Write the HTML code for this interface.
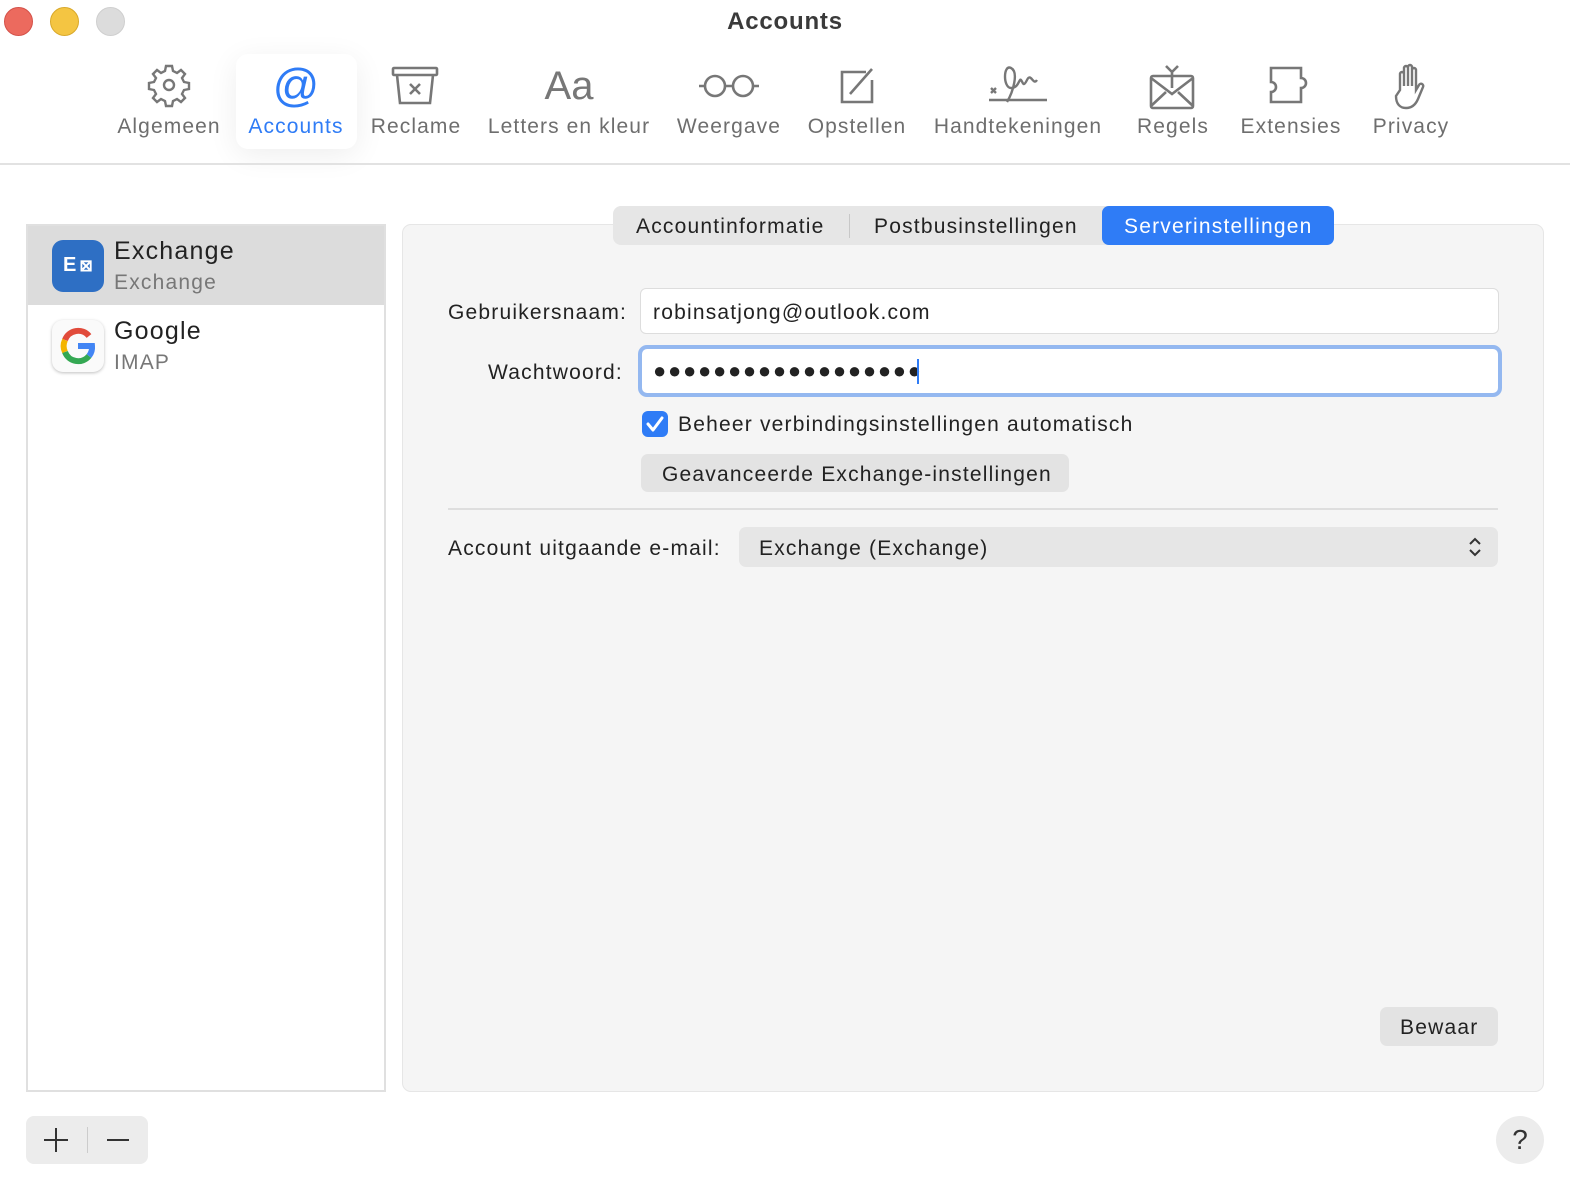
<!DOCTYPE html>
<html><head><meta charset="utf-8"><style>
*{box-sizing:border-box;margin:0;padding:0}
body{width:1570px;height:1182px;background:#fff;font-family:"Liberation Sans",sans-serif;position:relative;overflow:hidden;color:#222}
.a{position:absolute}
.tl{width:29px;height:29px;border-radius:50%;top:7px}
.lbl{position:absolute;top:115px;font-size:21px;color:#6e6e6e;white-space:nowrap;transform:translateX(-50%);letter-spacing:1.1px}
.ic{position:absolute;top:62px;transform:translateX(-50%)}
.t{font-size:21px;white-space:nowrap;letter-spacing:1.2px}
</style></head><body>
<div class="a tl" style="left:4px;background:#ec6a5e;border:1px solid #d4524a"></div>
<div class="a tl" style="left:50px;background:#f4c542;border:1px solid #d9a92b"></div>
<div class="a tl" style="left:96px;background:#dcdcdc;border:1px solid #cfcfcf"></div>
<div class="a" style="left:0;width:1570px;top:8px;text-align:center;font-size:24px;font-weight:bold;color:#3a3a3a;letter-spacing:0.8px">Accounts</div>

<div class="a" style="left:236px;top:54px;width:121px;height:95px;background:#fff;border-radius:12px;box-shadow:0 6px 30px rgba(0,0,0,0.07)"></div>

<svg class="ic" style="left:169px" width="46" height="46" viewBox="0 0 46 46" fill="none" stroke="#777" stroke-width="2.4"><path d="M20 4h6l1 5 4 2 4-3 4 4-3 4 2 4 5 1v6l-5 1-2 4 3 4-4 4-4-3-4 2-1 5h-6l-1-5-4-2-4 3-4-4 3-4-2-4-5-1v-6l5-1 2-4-3-4 4-4 4 3 4-2z"/><circle cx="23" cy="23" r="5"/></svg>
<div class="ic" style="left:296px;top:58px;font-size:46px;color:#2f7cf6">@</div>
<svg class="ic" style="left:415px" width="50" height="46" viewBox="0 0 50 46" fill="none" stroke="#777" stroke-width="2.6"><rect x="3" y="6" width="44" height="7" rx="1"/><path d="M7 13l3 28h30l3-28"/><path d="M20 22l10 10M30 22l-10 10"/></svg>
<div class="ic" style="left:569px;top:64px;font-size:40px;color:#777">Aa</div>
<svg class="ic" style="left:729px" width="64" height="46" viewBox="0 0 64 46" fill="none" stroke="#777" stroke-width="2.6"><circle cx="18" cy="24" r="10"/><circle cx="46" cy="24" r="10"/><path d="M28 24h8M2 24h6M56 24h6"/></svg>
<svg class="ic" style="left:857px" width="46" height="46" viewBox="0 0 46 46" fill="none" stroke="#777" stroke-width="2.6"><path d="M32 10H8v30h30V18"/><path d="M16 32l22-25"/></svg>
<svg class="ic" style="left:1018px" width="62" height="46" viewBox="0 0 62 46" fill="none" stroke="#777" stroke-width="2.4"><path d="M2 38h58"/><path d="M4 26l5 5M9 26l-5 5"/><path d="M20 40c6-10 12-30 4-34s-8 20 0 20 8-10 10-8 2 8 6 0 6 6 10 0"/></svg>
<svg class="ic" style="left:1172px" width="50" height="48" viewBox="0 0 50 48" fill="none" stroke="#777" stroke-width="2.6"><rect x="4" y="14" width="42" height="32" rx="2"/><path d="M4 16l21 16 21-16M4 44l15-14M46 44l-15-14"/><path d="M25 26V8M25 10l-6-6M25 10l6-6"/></svg>
<svg class="ic" style="left:1292px" width="50" height="46" viewBox="0 0 50 46" fill="none" stroke="#777" stroke-width="2.6"><path d="M4 6h30v10a5 5 0 1 1 0 10v14H4V30a5 5 0 1 0 0-10z"/></svg>
<svg class="ic" style="left:1411px" width="40" height="48" viewBox="0 0 40 48" fill="none" stroke="#777" stroke-width="2.4"><path d="M9 28V12a2 2 0 0 1 4 0v12V6a2 2 0 0 1 4 0v18V5a2 2 0 0 1 4 0v19V8a2 2 0 0 1 4 0v20l3-5a2 2 0 0 1 4 2l-5 12c-3 7-8 9-12 9-6 0-10-4-10-12z"/></svg>

<div class="lbl" style="left:169px">Algemeen</div>
<div class="lbl" style="left:296px;color:#2f7cf6">Accounts</div>
<div class="lbl" style="left:416px">Reclame</div>
<div class="lbl" style="left:569px">Letters en kleur</div>
<div class="lbl" style="left:729px">Weergave</div>
<div class="lbl" style="left:857px">Opstellen</div>
<div class="lbl" style="left:1018px">Handtekeningen</div>
<div class="lbl" style="left:1173px">Regels</div>
<div class="lbl" style="left:1291px">Extensies</div>
<div class="lbl" style="left:1411px">Privacy</div>

<div class="a" style="left:0;top:163px;width:1570px;height:2px;background:#e2e2e2"></div>

<div class="a" style="left:26px;top:224px;width:360px;height:868px;border:2px solid #e0e0e0;background:#fff"></div>
<div class="a" style="left:28px;top:226px;width:356px;height:79px;background:#dcdcdc"></div>
<div class="a" style="left:52px;top:240px;width:52px;height:52px;border-radius:11px;background:#2e6fc4;color:#fff;font-weight:bold;font-size:20px;padding:14px 0 0 11px">E<span style="font-size:16px;margin-left:3px">⊠</span></div>
<div class="a t" style="left:114px;top:237px;font-size:25px;color:#222">Exchange</div>
<div class="a t" style="left:114px;top:271px;color:#777">Exchange</div>
<div class="a" style="left:52px;top:320px;width:52px;height:52px;border-radius:11px;background:#fafafa;box-shadow:0 1px 3px rgba(0,0,0,.25)"></div>
<svg class="a" style="left:58px;top:326px" width="40" height="40" viewBox="0 0 40 40" fill="none" stroke-width="6"><path d="M31 10A14 14 0 0 0 7 14" stroke="#e14b3b"/><path d="M7 14a14 14 0 0 0 0 12" stroke="#f4b400"/><path d="M7 26a14 14 0 0 0 24 4" stroke="#34a853"/><path d="M31 30a14 14 0 0 0 3-10H20" stroke="#4285f4"/></svg>
<div class="a t" style="left:114px;top:317px;font-size:25px;color:#222">Google</div>
<div class="a t" style="left:114px;top:351px;color:#777">IMAP</div>

<div class="a" style="left:402px;top:224px;width:1142px;height:868px;background:#f5f5f5;border:1px solid #e6e6e6;border-radius:9px"></div>
<div class="a" style="left:613px;top:206px;width:721px;height:39px;background:#e6e6e6;border-radius:8px"></div>
<div class="a" style="left:849px;top:214px;width:1px;height:24px;background:#c8c8c8"></div>
<div class="a" style="left:1102px;top:206px;width:232px;height:39px;background:#2f7cf6;border-radius:7px"></div>
<div class="a t" style="left:636px;top:215px">Accountinformatie</div>
<div class="a t" style="left:874px;top:215px">Postbusinstellingen</div>
<div class="a t" style="left:1124px;top:215px;color:#fff">Serverinstellingen</div>

<div class="a t" style="left:448px;top:301px">Gebruikersnaam:</div>
<div class="a" style="left:640px;top:288px;width:859px;height:46px;background:#fff;border:1px solid #ddd;border-radius:6px"></div>
<div class="a t" style="left:653px;top:301px">robinsatjong@outlook.com</div>
<div class="a t" style="left:488px;top:361px">Wachtwoord:</div>
<div class="a" style="left:638px;top:345px;width:864px;height:52px;background:#fff;border:4px solid #94b8f0;border-radius:9px"></div>
<div class="a" style="left:653px;top:358px;font-size:22px;letter-spacing:1.7px;white-space:nowrap">●●●●●●●●●●●●●●●●●●</div>
<div class="a" style="left:917px;top:359px;width:2px;height:25px;background:#2f7cf6"></div>

<div class="a" style="left:642px;top:411px;width:26px;height:26px;background:#2f7cf6;border-radius:6px"></div>
<svg class="a" style="left:642px;top:411px" width="26" height="26" viewBox="0 0 26 26" fill="none" stroke="#fff" stroke-width="3" stroke-linecap="round" stroke-linejoin="round"><path d="M6 13l5 6 9-12"/></svg>
<div class="a t" style="left:678px;top:413px">Beheer verbindingsinstellingen automatisch</div>
<div class="a" style="left:641px;top:454px;width:428px;height:38px;background:#e3e3e3;border-radius:7px"></div>
<div class="a t" style="left:662px;top:463px">Geavanceerde Exchange-instellingen</div>
<div class="a" style="left:448px;top:508px;width:1050px;height:2px;background:#dedede"></div>

<div class="a t" style="left:448px;top:537px">Account uitgaande e-mail:</div>
<div class="a" style="left:739px;top:527px;width:759px;height:40px;background:#e6e6e6;border-radius:7px"></div>
<div class="a t" style="left:759px;top:537px">Exchange (Exchange)</div>
<svg class="a" style="left:1467px;top:537px" width="16" height="20" viewBox="0 0 16 20" fill="none" stroke="#333" stroke-width="2"><path d="M3 7l5-5 5 5M3 13l5 5 5-5"/></svg>

<div class="a" style="left:1380px;top:1007px;width:118px;height:39px;background:#e3e3e3;border-radius:7px"></div>
<div class="a t" style="left:1400px;top:1016px">Bewaar</div>

<div class="a" style="left:26px;top:1116px;width:122px;height:48px;background:#ececec;border-radius:8px"></div>
<div class="a" style="left:87px;top:1127px;width:1px;height:26px;background:#ccc"></div>
<div class="a" style="left:44px;top:1139px;width:24px;height:2px;background:#333"></div>
<div class="a" style="left:55px;top:1128px;width:2px;height:24px;background:#333"></div>
<div class="a" style="left:107px;top:1139px;width:22px;height:2px;background:#333"></div>
<div class="a" style="left:1496px;top:1116px;width:48px;height:48px;border-radius:50%;background:#ececec;text-align:center;font-size:28px;line-height:48px;color:#333">?</div>
</body></html>
